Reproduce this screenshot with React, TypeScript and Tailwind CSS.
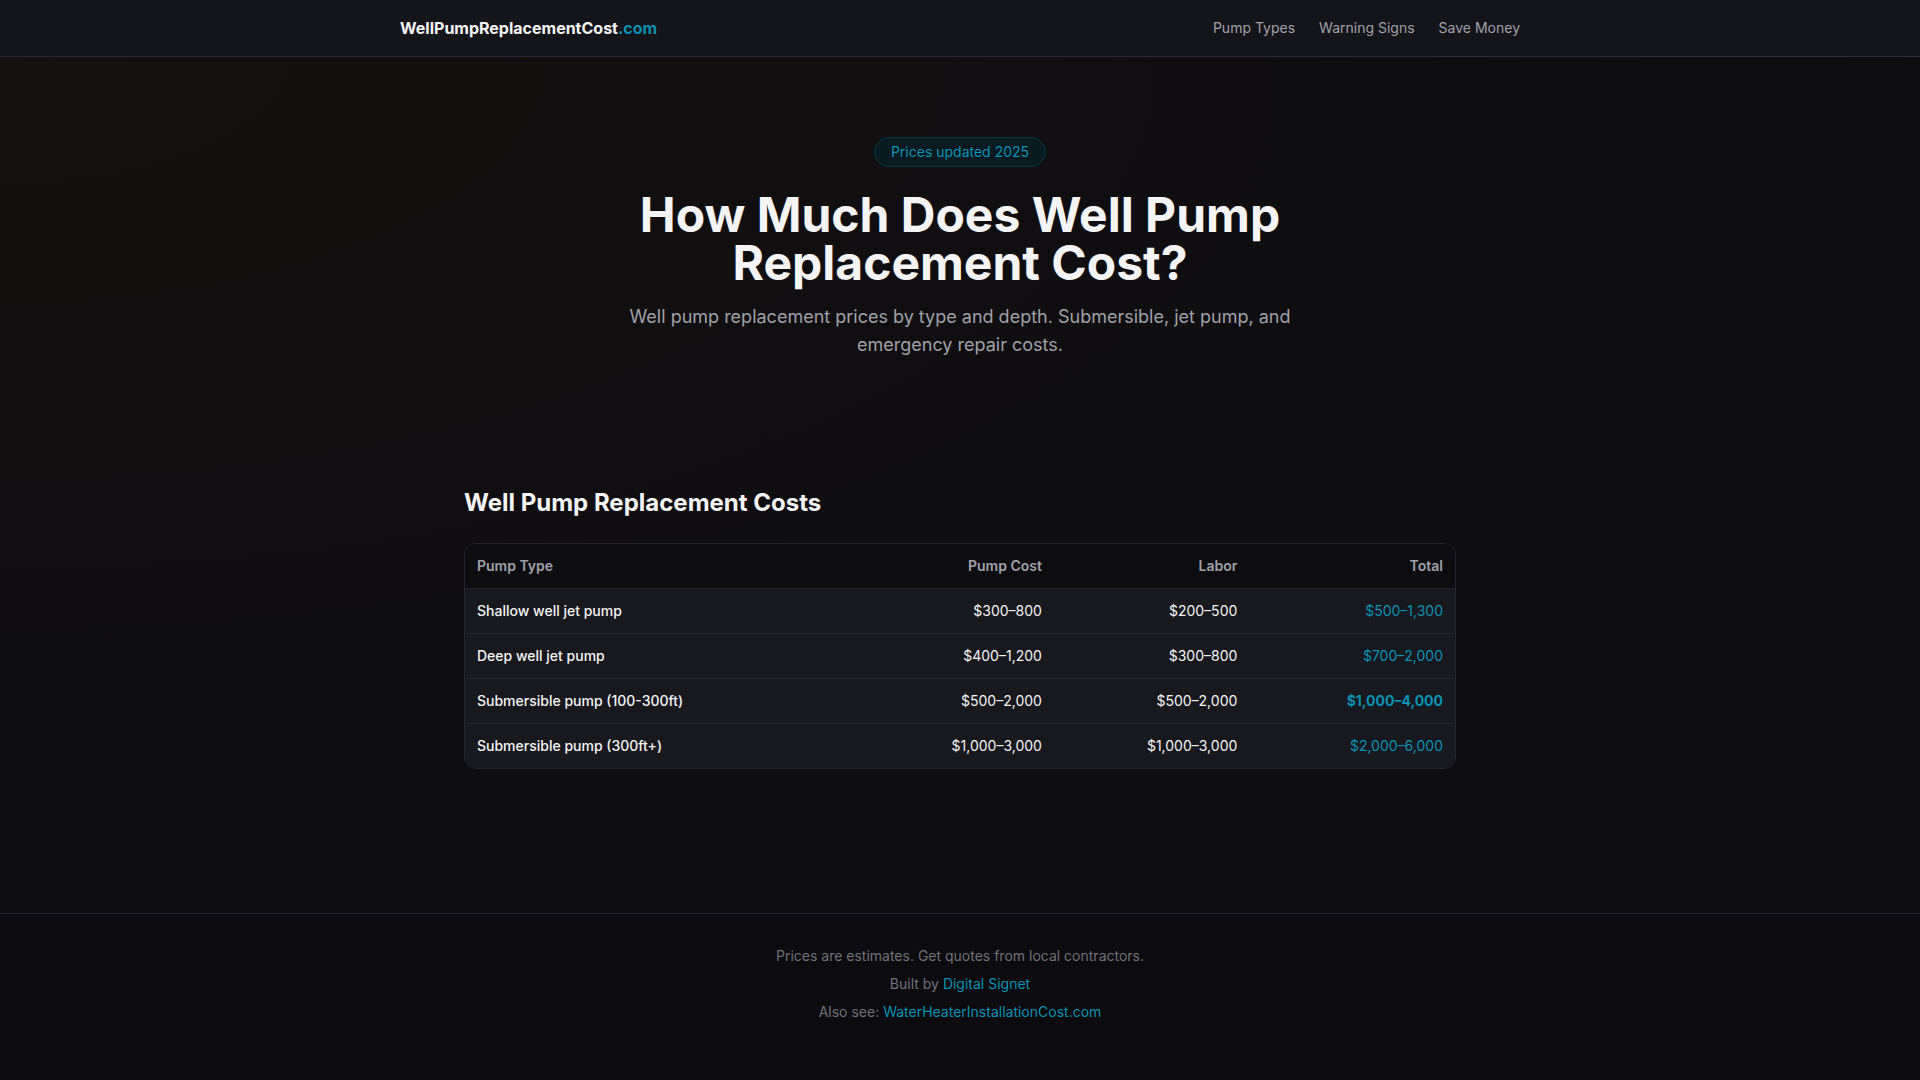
const rows = [
  { type: "Shallow well jet pump", pump: "$300–800", labor: "$200–500", total: "$500–1,300", bold: false },
  { type: "Deep well jet pump", pump: "$400–1,200", labor: "$300–800", total: "$700–2,000", bold: false },
  { type: "Submersible pump (100-300ft)", pump: "$500–2,000", labor: "$500–2,000", total: "$1,000–4,000", bold: true },
  { type: "Submersible pump (300ft+)", pump: "$1,000–3,000", labor: "$1,000–3,000", total: "$2,000–6,000", bold: false },
];

function Header() {
  return (
    <header className="border-b border-[#2a2838] bg-[#14141b]">
      <div className="mx-auto flex h-14 max-w-6xl items-center justify-between px-4">
        <a href="#" className="text-base font-bold text-[#f4f4f5]">
          WellPumpReplacementCost<span className="text-[#0891b2]">.com</span>
        </a>
        <nav className="flex items-center gap-6 text-sm text-[#a1a1aa]">
          <a href="#">Pump Types</a>
          <a href="#">Warning Signs</a>
          <a href="#">Save Money</a>
        </nav>
      </div>
    </header>
  );
}

function Hero() {
  return (
    <section className="px-4 pt-20 pb-20 text-center">
      <span className="inline-block rounded-full border border-[#0e3644] bg-[#0a1a21] px-4 py-1 text-sm text-[#0891b2]">
        Prices updated 2025
      </span>
      <h1 className="mx-auto mt-6 max-w-3xl text-5xl leading-none font-bold text-[#f4f4f5]">
        How Much Does Well Pump Replacement Cost?
      </h1>
      <p className="mx-auto mt-4 max-w-2xl text-lg text-[#a1a1aa]">
        Well pump replacement prices by type and depth. Submersible, jet pump, and emergency repair costs.
      </p>
    </section>
  );
}

function CostTable() {
  return (
    <section className="mx-auto max-w-5xl px-4 pt-12 pb-36">
      <h2 className="mb-6 text-2xl font-bold text-[#f4f4f5]">Well Pump Replacement Costs</h2>
      <div className="overflow-hidden rounded-xl border border-[#26252f]">
        <table className="w-full text-sm">
          <thead className="bg-[#0c0c11] text-[#a1a1aa]">
            <tr>
              <th className="h-11 px-3 text-left font-semibold">Pump Type</th>
              <th className="h-11 px-3 text-right font-semibold">Pump Cost</th>
              <th className="h-11 px-3 text-right font-semibold">Labor</th>
              <th className="h-11 px-3 text-right font-semibold">Total</th>
            </tr>
          </thead>
          <tbody className="bg-[#18181f] text-[#f4f4f5]">
            {rows.map((r) => (
              <tr key={r.type} className="border-t border-[#26252f]">
                <td className="px-3 py-3 font-medium">{r.type}</td>
                <td className="px-3 py-3 text-right">{r.pump}</td>
                <td className="px-3 py-3 text-right">{r.labor}</td>
                <td className={`px-3 py-3 text-right text-[#0891b2] ${r.bold ? "font-bold" : ""}`}>{r.total}</td>
              </tr>
            ))}
          </tbody>
        </table>
      </div>
    </section>
  );
}

function Footer() {
  return (
    <footer className="border-t border-[#26252f] bg-[#0c0b0f] px-4 pt-8 pb-14 text-center text-sm text-[#71717a]">
      <p>Prices are estimates. Get quotes from local contractors.</p>
      <p className="mt-2">
        Built by <a href="#" className="text-[#0891b2]">Digital Signet</a>
      </p>
      <p className="mt-2">
        Also see: <a href="#" className="text-[#0891b2]">WaterHeaterInstallationCost.com</a>
      </p>
    </footer>
  );
}

export default function App() {
  return (
    <div className="min-h-screen bg-[#0d0c10] font-['Inter',sans-serif] antialiased">
      <Header />
      <main className="bg-[radial-gradient(ellipse_at_top_left,#14100f_0%,#0e0d10_55%,#0d0c10_100%)]">
        <Hero />
        <CostTable />
      </main>
      <Footer />
    </div>
  );
}
